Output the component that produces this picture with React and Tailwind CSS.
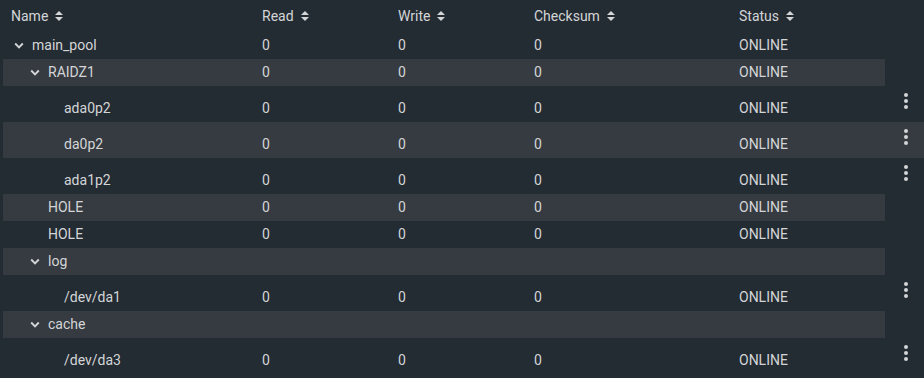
import React from "react";

const rows = [
    { name: "main_pool", level: 0, expandable: true, stats: true },
    { name: "RAIDZ1", level: 1, expandable: true, stats: true, striped: true },
    { name: "ada0p2", level: 2, stats: true, menu: true },
    { name: "da0p2", level: 2, stats: true, menu: true, striped: true },
    { name: "ada1p2", level: 2, stats: true, menu: true },
    { name: "HOLE", level: 1, stats: true, striped: true },
    { name: "HOLE", level: 1, stats: true },
    { name: "log", level: 1, expandable: true, striped: true },
    { name: "/dev/da1", level: 2, stats: true, menu: true },
    { name: "cache", level: 1, expandable: true, striped: true },
    { name: "/dev/da3", level: 2, stats: true, menu: true },
];

const SortIcon = () => (
    <svg width="8" height="10" viewBox="0 0 8 10" className="ml-[7px] fill-current">
        <path d="M4 0 L8 4 H0 Z" />
        <path d="M0 6 H8 L4 10 Z" />
    </svg>
);

const Chevron = () => (
    <svg width="10" height="7" viewBox="0 0 10 7" className="ml-[4px]">
        <path d="M1.2 1.5 L5 5.3 L8.8 1.5" fill="none" stroke="currentColor" strokeWidth="1.9" />
    </svg>
);

const Dots = () => (
    <svg width="6" height="18" viewBox="0 0 6 18" className="fill-current">
        <circle cx="3" cy="3" r="2" />
        <circle cx="3" cy="9" r="2" />
        <circle cx="3" cy="15" r="2" />
    </svg>
);

export default function App() {
    return (
        <div
            className="w-[924px] h-[378px] bg-[#232b33] text-[#d3d5d7] text-[14px] overflow-hidden"
            style={{ fontFamily: "Roboto, 'Liberation Sans', sans-serif" }}
        >
            {/* Header */}
            <div className="flex h-[32px] pl-[3px] items-center">
                <div className="flex w-[882px] items-center">
                    {["Name", "Read", "Write", "Checksum", "Status"].map((h, i) => (
                        <div
                            key={h}
                            className={
                                "flex items-center pl-[7px] " +
                                ["w-[252px] pl-[8px]", "w-[136px]", "w-[136px]", "w-[205px]", "w-[153px]"][i]
                            }
                        >
                            {h}
                            <SortIcon />
                        </div>
                    ))}
                </div>
            </div>

            {rows.map((r, idx) => (
                <div
                    key={idx}
                    className={
                        "flex ml-[3px] " +
                        (r.menu ? "h-[36px] " : "h-[27px] ") +
                        (r.striped ? (r.menu ? "bg-[#363b41] w-[921px]" : "bg-[#363b41] w-[882px]") : "w-[921px]")
                    }
                >
                    <div className={"flex w-[882px] h-[27px] items-center " + (r.menu ? "mt-[9px]" : "")}>
                        <div className="flex items-center w-[252px] pl-[7px]">
                            <div style={{ width: r.level * 16 }} />
                            <div className="w-[22px] flex items-center">{r.expandable && <Chevron />}</div>
                            <span>{r.name}</span>
                        </div>
                        <div className="w-[136px] pl-[7px]">{r.stats ? "0" : ""}</div>
                        <div className="w-[136px] pl-[7px]">{r.stats ? "0" : ""}</div>
                        <div className="w-[205px] pl-[7px]">{r.stats ? "0" : ""}</div>
                        <div className="w-[153px] pl-[7px]">{r.stats ? "ONLINE" : ""}</div>
                    </div>
                    {r.menu && (
                        <div className="flex flex-1 justify-center pt-[6px] pl-[2px]">
                            <Dots />
                        </div>
                    )}
                </div>
            ))}
        </div>
    );
}
